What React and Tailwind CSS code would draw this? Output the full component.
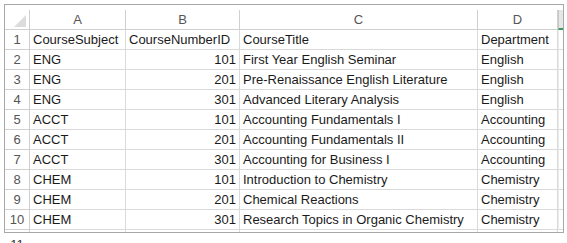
import React from 'react';

const rows = [
  ['CourseSubject', 'CourseNumberID', 'CourseTitle', 'Department', true],
  ['ENG', '101', 'First Year English Seminar', 'English'],
  ['ENG', '201', 'Pre-Renaissance English Literature', 'English'],
  ['ENG', '301', 'Advanced Literary Analysis', 'English'],
  ['ACCT', '101', 'Accounting Fundamentals I', 'Accounting'],
  ['ACCT', '201', 'Accounting Fundamentals II', 'Accounting'],
  ['ACCT', '301', 'Accounting for Business I', 'Accounting'],
  ['CHEM', '101', 'Introduction to Chemistry', 'Chemistry'],
  ['CHEM', '201', 'Chemical Reactions', 'Chemistry'],
  ['CHEM', '301', 'Research Topics in Organic Chemistry', 'Chemistry'],
];

const cell = 'h-[20px] border-r border-b border-[#dadada] flex items-center px-[3px] whitespace-nowrap overflow-hidden';
const head = 'h-[20px] border-r border-b border-[#d0d0d0] flex items-center justify-center text-[#555]';

const App = () => {
  return (
    <div className="w-[567px] h-[243px] overflow-hidden bg-white pl-[4px] pt-[4px] font-['Liberation_Sans',sans-serif] text-[13px] text-[#1a1a1a]">
      <div className="w-[560px] h-[229px] border border-[#a8a8a8] overflow-hidden pt-[5px]">
        <div className="grid grid-cols-[25px_96px_114px_238px_80px_5px]">
          {/* column header row */}
          <div className={`${head} relative`}>
            <svg width="12" height="12" viewBox="0 0 12 12" className="absolute right-[3px] bottom-[2px]">
              <polygon points="12,0 12,12 0,12" fill="#dcdcdc" />
            </svg>
          </div>
          <div className={head}>A</div>
          <div className={head}>B</div>
          <div className={head}>C</div>
          <div className={head}>D</div>
          <div className="h-[20px] border-b-2 border-b-[#3a9b5a] bg-[#e6e6e6] border-l border-l-[#c8c8c8]" />

          {rows.map((r, i) => (
            <React.Fragment key={i}>
              <div className={`${head} text-[#333]`}>{i + 1}</div>
              <div className={cell}>{r[0]}</div>
              <div className={`${cell} ${r[4] ? '' : 'justify-end'}`}>{r[1]}</div>
              <div className={cell}>{r[2]}</div>
              <div className={cell}>{r[3]}</div>
              <div className="h-[20px] border-b border-[#dadada] border-l border-l-[#ececec]" />
            </React.Fragment>
          ))}

          {/* top of row 11, just under the last border */}
          <div className="h-[20px] border-r border-[#d0d0d0]" />
          <div className="h-[20px] border-r border-[#dadada]" />
          <div className="h-[20px] border-r border-[#dadada]" />
          <div className="h-[20px] border-r border-[#dadada]" />
          <div className="h-[20px] border-r border-[#dadada]" />
          <div className="h-[20px]" />
        </div>
      </div>
      <div className="w-[25px] mt-[4px] pl-[1px] text-center leading-[15px] text-[#333]">11</div>
    </div>
  );
};

export default App;
